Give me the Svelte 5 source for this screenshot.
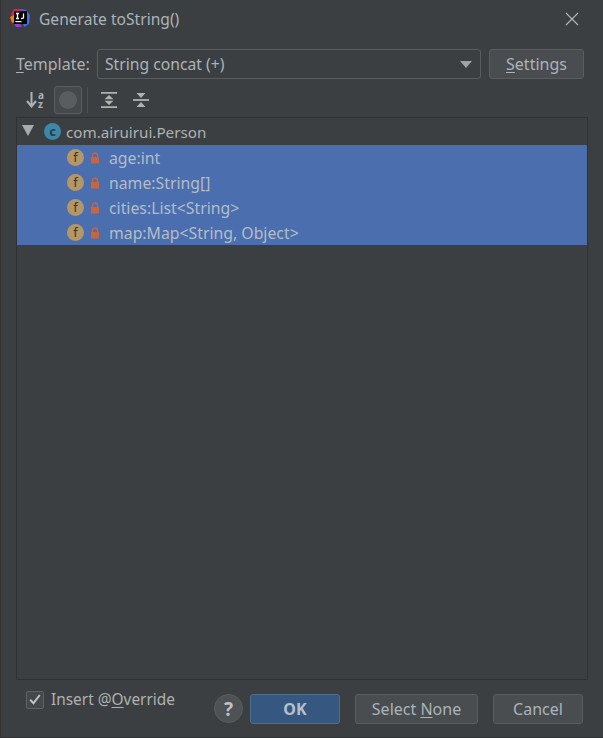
<script>
    const fields = [
        { name: "age", type: "int" },
        { name: "name", type: "String[]" },
        { name: "cities", type: "List<String>" },
        { name: "map", type: "Map<String, Object>" },
    ];
</script>

<div class="dialog">
    <header class="title-bar">
        <svg class="logo" width="20" height="20" viewBox="0 0 20 20">
            <path d="M1 6 L4 1 L11 1 L11 6 L4 12 Z" fill="#e8176c" />
            <path d="M11 1 L16 2 L20 7 L19 16 L14 19 L12 10 Z" fill="#3b6ff0" />
            <path d="M0 9 L4 7 L5 14 L2 15 Z" fill="#f97a12" />
            <path d="M3 14 L6 19 L12 19 L8 13 Z" fill="#9a3fd0" />
            <rect x="4" y="3" width="13" height="13" fill="#000" />
            <rect x="5.5" y="13" width="6" height="1.2" fill="#fff" />
            <path d="M6 5.5 H9 M7.5 5.5 V10.5 M6 10.5 H9 M13.5 5.5 V9.5 Q13.5 10.5 11 10.5" stroke="#fff" stroke-width="1.3" fill="none" />
        </svg>
        <span class="title">Generate toString()</span>
        <svg class="close" width="14" height="14" viewBox="0 0 14 14">
            <path d="M1 1 L13 13 M13 1 L1 13" stroke="#b4b7b9" stroke-width="1.1" />
        </svg>
    </header>

    <div class="template-row">
        <span class="template-label"><u>T</u>emplate:</span>
        <div class="combo">
            <span>String concat (+)</span>
            <svg width="12" height="7" viewBox="0 0 12 7"><path d="M0 0 H12 L6 7 Z" fill="#a0a2a4" /></svg>
        </div>
        <button class="btn settings"><u>S</u>ettings</button>
    </div>

    <div class="toolbar">
        <div class="tool sort">
            <svg width="11" height="17" viewBox="0 0 11 17">
                <path d="M5.5 1 V15 M1 10 L5.5 15.5 L10 10" stroke="#afb1b3" stroke-width="2" fill="none" />
            </svg>
            <span class="az">a<br />z</span>
        </div>
        <div class="tool toggled">
            <svg width="18" height="18" viewBox="0 0 18 18"><circle cx="9" cy="9" r="9" fill="#5a5c5e" /></svg>
        </div>
        <span class="tool-sep"></span>
        <div class="tool">
            <svg width="16" height="18" viewBox="0 0 16 18">
                <path d="M0 1 H16 V2.8 H0 Z M0 15.2 H16 V17 H0 Z" fill="#afb1b3" />
                <path d="M8 4 L12.5 8.2 H3.5 Z M8 14 L12.5 9.8 H3.5 Z" fill="#afb1b3" />
            </svg>
        </div>
        <div class="tool">
            <svg width="16" height="18" viewBox="0 0 16 18">
                <path d="M0 8.1 H16 V9.9 H0 Z" fill="#afb1b3" />
                <path d="M8 7 L12.5 2 H3.5 Z M8 11 L12.5 16 H3.5 Z" fill="#afb1b3" />
            </svg>
        </div>
    </div>

    <div class="tree">
        <div class="root-row">
            <svg class="arrow" width="12" height="11" viewBox="0 0 12 11"><path d="M0 0 H12 L6 11 Z" fill="#a8aaac" /></svg>
            <span class="class-icon">c</span>
            <span class="root-text">com.airuirui.Person</span>
        </div>
        {#each fields as field}
            <div class="field-row">
                <span class="field-icon">f</span>
                <svg class="lock" width="10" height="12" viewBox="0 0 10 12">
                    <path d="M2.5 5.5 V3.5 A2.5 2.5 0 0 1 7.5 3.5 V5.5" stroke="#c7653f" stroke-width="1.4" fill="none" />
                    <rect x="1" y="5" width="8" height="6.5" fill="#c7653f" />
                </svg>
                <span class="field-text">{field.name}:{field.type}</span>
            </div>
        {/each}
    </div>

    <footer class="footer">
        <label class="check">
            <span class="box">
                <svg width="12" height="11" viewBox="0 0 12 11"><path d="M1.2 5.8 L4.5 9.2 L10.8 1" stroke="#c0c2c4" stroke-width="2" fill="none" /></svg>
            </span>
            <span class="check-text">Insert @<u>O</u>verride</span>
        </label>
        <div class="help">?</div>
        <button class="btn ok">OK</button>
        <button class="btn none">Select <u>N</u>one</button>
        <button class="btn cancel">Cancel</button>
    </footer>
</div>

<style>
    :global(body) {
        margin: 0;
        background: #3c3f41;
    }

    .dialog {
        width: 603px;
        height: 738px;
        box-sizing: border-box;
        display: flex;
        flex-direction: column;
        border-left: 1px solid #323232;
        border-bottom: 1px solid #323232;
        background: #3c3f41;
        color: #adb1b3;
        font-family: "Noto Sans", "Open Sans", sans-serif;
        font-size: 16px;
    }

    u {
        text-underline-offset: 2px;
    }

    .title-bar {
        display: flex;
        align-items: center;
        height: 38px;
        padding: 0 24px 0 9px;
    }

    .logo {
        margin: 0 9px 3px 0;
    }

    .title {
        flex: 1;
        font-size: 15.6px;
        color: #a9b4bb;
    }

    .template-row {
        display: flex;
        align-items: center;
        margin-top: 11px;
        padding: 0 19px 0 15px;
        height: 30px;
    }

    .template-label {
        width: 81px;
    }

    .combo {
        flex: 1;
        height: 30px;
        box-sizing: border-box;
        display: flex;
        align-items: center;
        justify-content: space-between;
        padding: 0 8px 0 7px;
        border: 1px solid #5a5d5f;
        border-radius: 3px;
        background: #3c3f41;
        color: #a9b4bb;
        font-size: 15.7px;
    }

    .btn {
        height: 30px;
        box-sizing: border-box;
        border: 1px solid #5a5d5f;
        border-radius: 3px;
        background: #4a4d4f;
        color: #a9b4bb;
        font: inherit;
        padding: 0;
    }

    .settings {
        width: 95px;
        margin-left: 8px;
    }

    .toolbar {
        display: flex;
        align-items: center;
        height: 29px;
        margin-top: 6px;
        padding-left: 21px;
    }

    .tool {
        width: 26px;
        height: 28px;
        box-sizing: border-box;
        display: flex;
        align-items: center;
        justify-content: center;
        margin-right: 6px;
    }

    .sort {
        gap: 1px;
    }

    .az {
        font-size: 10px;
        line-height: 9px;
        font-weight: 700;
        color: #afb1b3;
    }

    .toggled {
        width: 28px;
        margin-right: 5px;
        border: 1px solid #5b5e60;
        border-radius: 3px;
        background: #46494b;
    }

    .tool-sep {
        width: 1px;
        height: 26px;
        background: #4f5254;
        margin: 0 8px 0 0;
    }

    .tree {
        flex: 1;
        margin: 3px 15px 0 15px;
        border: 1px solid #2f3133;
        display: flex;
        flex-direction: column;
    }

    .root-row {
        display: flex;
        align-items: center;
        height: 27px;
    }

    .root-text {
        font-size: 15.2px;
    }

    .arrow {
        margin: 0 0 3px 5px;
    }

    .class-icon {
        width: 17px;
        height: 17px;
        margin: 0 5px 0 10px;
        border-radius: 50%;
        background: #3f87a6;
        color: #1f3f50;
        display: flex;
        align-items: center;
        justify-content: center;
        font-size: 13px;
        line-height: 1;
        font-weight: 700;
    }

    .field-row {
        display: flex;
        align-items: center;
        height: 25px;
        padding-left: 50px;
        background: #4b6eaf;
    }

    .field-icon {
        width: 17px;
        height: 17px;
        border-radius: 50%;
        background: #b39767;
        color: #3a3428;
        display: flex;
        align-items: center;
        justify-content: center;
        font-size: 13px;
        line-height: 1;
    }

    .lock {
        margin: 0 9px 0 6px;
    }

    .field-text {
        color: #b3bdc6;
        font-size: 15.8px;
    }

    .footer {
        display: flex;
        align-items: center;
        height: 57px;
        padding: 0 19px 0 25px;
    }

    .check {
        display: flex;
        align-items: center;
        align-self: flex-start;
        gap: 7px;
        margin-top: 9px;
        width: 188px;
    }

    .check-text {
        font-size: 15.4px;
    }

    .box {
        width: 18px;
        height: 18px;
        box-sizing: border-box;
        border: 1px solid #606365;
        border-radius: 2px;
        background: #45484a;
        display: flex;
        align-items: center;
        justify-content: center;
    }

    .help {
        width: 29px;
        height: 29px;
        border-radius: 50%;
        background: #4f5254;
        border: 1px solid #5a5d5f;
        box-sizing: border-box;
        color: #bfc1c3;
        display: flex;
        align-items: center;
        justify-content: center;
        font-size: 19px;
        font-weight: 700;
        margin-right: 7px;
    }

    .ok {
        width: 90px;
        margin-right: 15px;
        background: #365880;
        border-color: #4c708c;
        color: #b4c0ca;
        font-weight: 700;
    }

    .none {
        width: 123px;
        margin-right: 15px;
    }

    .cancel {
        width: 90px;
    }
</style>
